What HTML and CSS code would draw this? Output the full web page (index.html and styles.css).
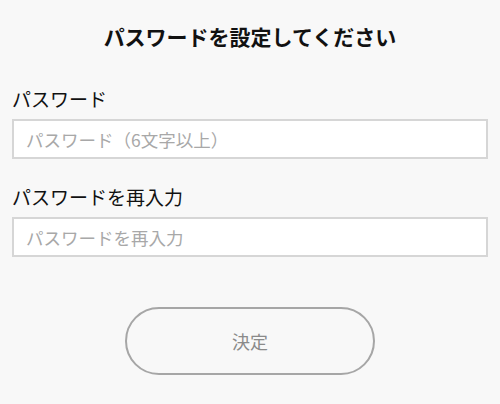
FILE: index.html
```html
<!DOCTYPE html>
<html lang="ja">
<head>
<meta charset="utf-8">
<link rel="stylesheet" href="styles.css">
</head>
<body>
<main class="page">
  <h1 class="title">パスワードを設定してください</h1>
  <div class="field field-first">
    <label class="label">パスワード</label>
    <input class="input" type="password" placeholder="パスワード（6文字以上）">
  </div>
  <div class="field field-second">
    <label class="label">パスワードを再入力</label>
    <input class="input" type="password" placeholder="パスワードを再入力">
  </div>
  <div class="actions">
    <button class="submit" type="button">決定</button>
  </div>
</main>
</body>
</html>
```

FILE: styles.css
```css
* { box-sizing: border-box; }
html, body {
  margin: 0;
  padding: 0;
  background: #f8f8f8;
}
body {
  font-family: "Noto Sans CJK JP", "Noto Sans", sans-serif;
  color: #111;
}
.page {
  display: flex;
  flex-direction: column;
  padding: 21px 12px 0 12px;
}
.title {
  margin: 0;
  font-size: 21px;
  font-weight: 700;
  line-height: 30px;
  text-align: center;
  color: #111;
}
.field {
  display: flex;
  flex-direction: column;
  gap: 8px;
}
.field-first { margin-top: 36px; }
.field-second { margin-top: 26px; }
.label {
  font-size: 19px;
  line-height: 24px;
  color: #111;
}
.input {
  width: 100%;
  height: 40px;
  border: 2px solid #d6d6d6;
  background: #fff;
  padding: 0 12px;
  font-family: inherit;
  font-size: 17.5px;
  color: #333;
  outline: none;
}
.input::placeholder { color: #a8a8a8; }
.actions {
  display: flex;
  justify-content: center;
  margin-top: 50px;
}
.submit {
  width: 250px;
  height: 68px;
  border: 2px solid #a6a6a6;
  border-radius: 34px;
  background: #f8f8f8;
  font-family: inherit;
  font-size: 18px;
  color: #8a8a8a;
  cursor: pointer;
}
```
